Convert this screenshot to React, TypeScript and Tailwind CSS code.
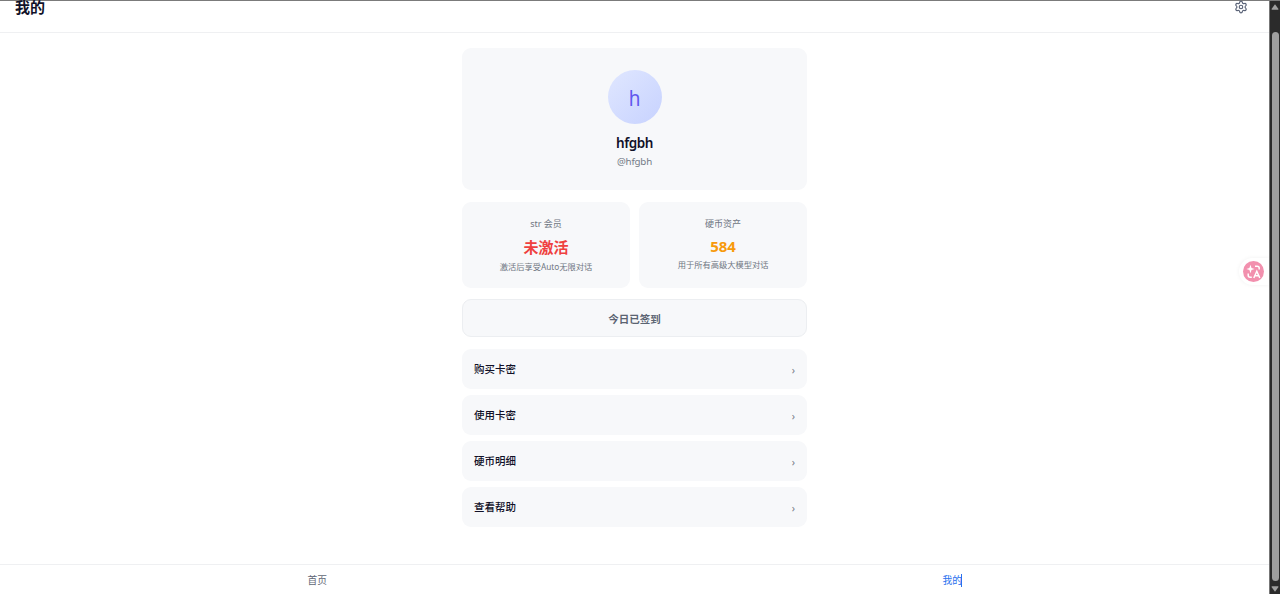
import { Settings } from "lucide-react";

const menu = ["购买卡密", "使用卡密", "硬币明细", "查看帮助"];

function Header() {
  return (
    <header className="flex h-8 items-start justify-between border-b border-[#eff0f2] pr-[21px] pl-[15px]">
      <h1 className="-mt-px text-[15px] leading-[15px] font-semibold text-[#111128]">我的</h1>
      <Settings className="-mt-px h-[14px] w-[14px] text-[#5b6478]" strokeWidth={2} />
    </header>
  );
}

function Profile() {
  return (
    <section className="flex h-[141.5px] flex-col items-center rounded-[9px] bg-[#f7f8fa] pt-[22px]">
      <div className="flex h-[54px] w-[54px] items-center justify-center rounded-full bg-linear-135 from-[#e0e7ff] to-[#c7d2fe] pt-[2px] text-[21px] leading-[52px] text-[#6058ee]">
        <span className="scale-x-90">h</span>
      </div>
      <p className="mt-[9px] text-[13.5px] leading-5 font-semibold tracking-[-0.4px] text-[#111128]">hfgbh</p>
      <p className="mt-px text-[9.75px] leading-4 tracking-[-0.2px] text-[#747b87]">@hfgbh</p>
    </section>
  );
}

function Stats() {
  return (
    <section className="mt-3 grid h-[86px] grid-cols-2 gap-[9px] text-center text-[#6f7682]">
      <div className="rounded-[9px] bg-[#f7f8fa] pt-[15px]">
        <p className="text-[9px] leading-[14px]">str 会员</p>
        <p className="mt-[5px] text-[15px] leading-[22px] font-bold text-[#ef4040]">未激活</p>
        <p className="mt-[3px] text-[8.25px] leading-3">激活后享受Auto无限对话</p>
      </div>
      <div className="rounded-[9px] bg-[#f7f8fa] pt-[15px]">
        <p className="text-[9px] leading-[14px]">硬币资产</p>
        <p className="mt-[5px] text-[15px] leading-5 font-bold text-[#f79a0b]">584</p>
        <p className="mt-[3px] text-[8.25px] leading-3">用于所有高级大模型对话</p>
      </div>
    </section>
  );
}

function Menu() {
  return (
    <nav className="mt-3 flex flex-col gap-[6px]">
      {menu.map((item) => (
        <a key={item} className="flex h-10 items-center justify-between rounded-[9px] bg-[#f7f8fa] px-3">
          <span className="text-[10.5px] leading-4 font-medium text-[#111128]">{item}</span>
          <span className="mt-[2px] text-[10.5px] leading-4 text-[#747b87]">›</span>
        </a>
      ))}
    </nav>
  );
}

function Scrollbar() {
  return (
    <div className="flex h-full w-[11px] shrink-0 flex-col items-center border-l border-[#777777] bg-[#2b2b2b]">
      <svg className="mt-[3px] h-[6px] w-2 shrink-0 fill-[#a0a0a0]" viewBox="0 0 8 6">
        <path d="M4 0.3 L7.5 5 Q7.6 5.8 6.8 5.8 H1.2 Q0.4 5.8 0.5 5Z" />
      </svg>
      <div className="mt-[22px] w-[7px] flex-1 rounded-full bg-[#9f9f9f]" />
      <svg className="mt-[5px] mb-[2px] h-[6px] w-2 shrink-0 fill-[#a0a0a0]" viewBox="0 0 8 6">
        <path d="M4 5.7 L7.5 1 Q7.6 0.2 6.8 0.2 H1.2 Q0.4 0.2 0.5 1Z" />
      </svg>
    </div>
  );
}

function TranslateButton() {
  return (
    <button className="absolute top-[257px] right-0 flex h-[27px] w-[30px] items-center rounded-l-full bg-white pl-[3.5px] shadow-[0_0_4px_rgba(0,0,0,0.06)]">
      <svg className="h-[21px] w-[21px]" viewBox="0 0 21 21" fill="none">
        <circle cx="10.5" cy="10.5" r="10.5" fill="#f290ae" />
        <path d="M7.5 3.8 L8.5 6.9 L11.6 8 L8.5 9.1 L7.5 12.2 L6.4 9.1 L3.4 8 L6.4 6.9Z" fill="#fff" />
        <path d="M12 5.2h2.2q2 0 2 2v1.3M5.2 12.5v1.8q0 2 2 2h1.6" stroke="#fff" strokeWidth="1.5" />
        <path d="M10.8 17 L13.8 10.3 L16.8 17M12 14.8h3.6" stroke="#fff" strokeWidth="1.5" />
      </svg>
    </button>
  );
}

export default function App() {
  return (
    <div className="flex h-[594px] w-full flex-col overflow-hidden bg-white font-['Noto_Sans','Noto_Sans_CJK_SC',sans-serif]">
      <div className="h-px shrink-0 bg-[#7b7b7b]" />
      <div className="flex min-h-0 flex-1">
        <div className="relative flex min-w-0 flex-1 flex-col">
          <Header />
          <main className="mx-auto mt-[15px] w-[345px] flex-1">
            <Profile />
            <Stats />
            <button className="mt-[11.5px] flex h-[38px] w-full items-center justify-center rounded-[9px] border border-[#eceef1] bg-[#f7f8fa] pt-[3px] text-[10.5px] font-semibold text-[#5b6472]">
              今日已签到
            </button>
            <Menu />
          </main>
          <footer className="grid h-[30px] grid-cols-2 border-t border-[#eff0f2] pt-px text-center text-[9.75px] leading-[30px]">
            <a className="text-[#5f6775]">首页</a>
            <a className="flex items-center justify-center text-[#2970ee]">
              我的
              <span className="-mt-px -mr-px -ml-px h-[13px] w-px bg-[#2970ee]" />
            </a>
          </footer>
          <TranslateButton />
        </div>
        <Scrollbar />
      </div>
    </div>
  );
}
